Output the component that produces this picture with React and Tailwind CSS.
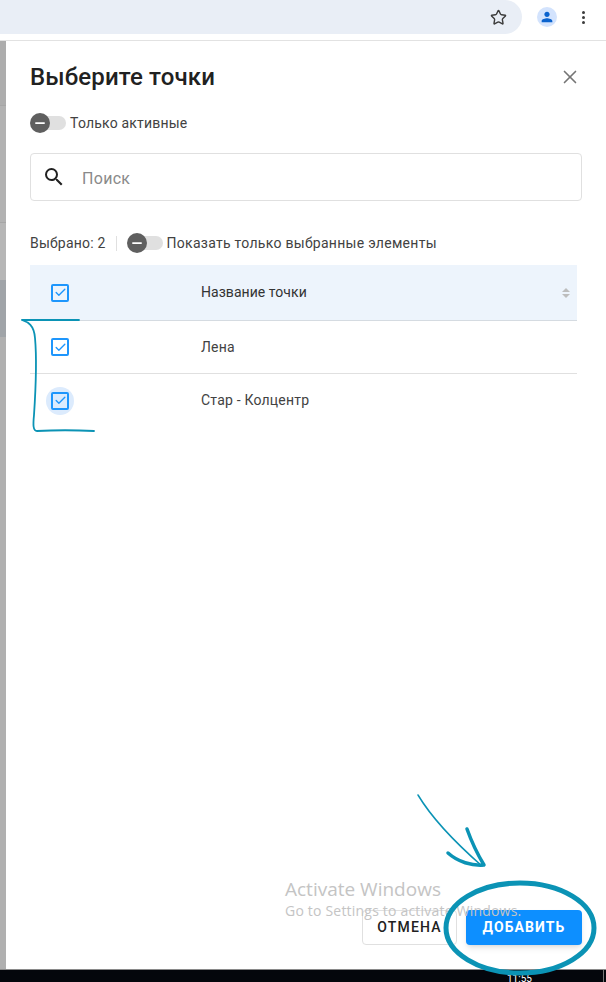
import React from 'react';
import { Star, X, Check, Minus } from 'lucide-react';

const Toggle = () => (
  <div className="relative w-[36px] h-[14px] flex items-center shrink-0">
    <div className="ml-[4px] w-[32px] h-[14px] rounded-full bg-[#e0e0e0]" />
    <div className="absolute left-0 top-[-3px] w-[20px] h-[20px] rounded-full bg-[#5f5f5f] flex items-center justify-center">
      <Minus size={14} strokeWidth={3} className="text-white" />
    </div>
  </div>
);

const Box = ({ halo }) => (
  <div className={`w-[28px] h-[28px] rounded-full flex items-center justify-center ${halo ? 'bg-[#dcebfd]' : ''}`}>
    <div className="w-[18px] h-[18px] rounded-[2px] border-2 border-[#1e96fc] flex items-center justify-center">
      <Check size={13} strokeWidth={2.5} className="text-[#1e96fc]" />
    </div>
  </div>
);

const Row = ({ name, halo, last }) => (
  <div className={`h-[53px] flex items-center ${last ? '' : 'border-b border-[#e0e0e0]'}`}>
    <div className="w-[60px] flex justify-center">
      <Box halo={halo} />
    </div>
    <span className="ml-[111px] text-[14px] text-[#424242] tracking-[0.2px]">{name}</span>
  </div>
);

export default function App() {
  return (
    <div className="relative w-[606px] h-[982px] overflow-hidden bg-white font-['Roboto',sans-serif] text-[#212121]">
      <div className="h-[41px] flex border-b border-[#e2e2e2] bg-white">
        <div className="w-[522px] h-[34px] rounded-r-full bg-[#e9eef6] flex items-center justify-end pr-[15px]">
          <Star size={17} strokeWidth={2} className="text-[#3c3c3c]" />
        </div>
        <div className="ml-[15px] mt-[7px] w-[20px] h-[20px] rounded-full bg-[#d3e3fd] flex items-center justify-center">
          <svg width="16" height="16" viewBox="0 0 24 24" fill="#0b63ce">
            <path d="M12 12c2.21 0 4-1.79 4-4s-1.79-4-4-4-4 1.79-4 4 1.79 4 4 4zm0 2c-2.67 0-8 1.34-8 4v2h16v-2c0-2.66-5.33-4-8-4z" />
          </svg>
        </div>
        <div className="ml-[25px] mt-[11px] flex flex-col gap-[2px]">
          <div className="w-[3px] h-[3px] rounded-full bg-[#3c3c3c]" />
          <div className="w-[3px] h-[3px] rounded-full bg-[#3c3c3c]" />
          <div className="w-[3px] h-[3px] rounded-full bg-[#3c3c3c]" />
        </div>
      </div>

      <div className="flex h-[928px]">
        <div className="w-[6px] shrink-0 flex flex-col bg-[#b0b0b0]">
          <div className="h-[64px] bg-[#adadad]" />
          <div className="h-[117px] bg-[#b2b2b2] border-t border-[#a6a6a6]" />
          <div className="h-[58px] bg-[#b6b6b6] border-t border-[#a6a6a6]" />
          <div className="h-[57px] bg-[#a0a4a8]" />
        </div>
        <div className="flex-1 flex flex-col pl-[24px] pr-[24px]">
          <div className="flex items-center justify-between pt-[21px]">
            <h1 className="text-[24px] leading-[30px] font-medium tracking-[0.13px] text-[#212121]">Выберите точки</h1>
            <X size={22} strokeWidth={1.8} className="text-[#757575] mr-[1px]" />
          </div>

          <div className="flex items-center mt-[21px] h-[20px]">
            <Toggle />
            <span className="ml-[4px] text-[14px] text-[#424242] tracking-[0.2px]">Только активные</span>
          </div>

          <div className="mt-[20px] h-[48px] rounded-[4px] border border-[#e0e0e0] flex items-center pl-[11px]">
            <svg width="24" height="24" viewBox="0 0 24 24" fill="#212121">
              <path d="M15.5 14h-.79l-.28-.27A6.47 6.47 0 0 0 16 9.5 6.5 6.5 0 1 0 9.5 16c1.61 0 3.09-.59 4.23-1.57l.27.28v.79l5 4.99L20.49 19l-4.99-5zm-6 0C7.01 14 5 11.99 5 9.5S7.01 5 9.5 5 14 7.01 14 9.5 11.99 14 9.5 14z" />
            </svg>
            <span className="ml-[16px] mt-[3px] text-[16px] tracking-[0.3px] text-[#8a8a8a]">Поиск</span>
          </div>

          <div className="flex items-center mt-[32px] h-[20px]">
            <span className="text-[14px] text-[#424242] tracking-[0.2px]">Выбрано: 2</span>
            <div className="ml-[10px] mr-[10px] w-px h-[15px] bg-[#e0e0e0]" />
            <Toggle />
            <span className="ml-[4px] text-[14px] text-[#424242] tracking-[0.28px]">Показать только выбранные элементы</span>
          </div>

          <div className="mt-[12px] w-[547px]">
            <div className="h-[56px] bg-[#edf4fc] border-b border-[#d5dbe1] flex items-center">
              <div className="w-[60px] flex justify-center">
                <Box />
              </div>
              <span className="ml-[111px] text-[14px] text-[#333] tracking-[0.05px]">Название точки</span>
              <svg className="ml-auto mr-[6px]" width="10" height="12" viewBox="0 0 10 12">
                <path d="M5 1l4 4H1z" fill="#bdbdbd" />
                <path d="M5 11L1 7h8z" fill="#bdbdbd" />
              </svg>
            </div>
            <Row name="Лена" />
            <Row name="Стар - Колцентр" halo last />
          </div>

          <div className="mt-auto mb-[24px] flex justify-end gap-[9px]">
            <button className="w-[95px] h-[35px] rounded-[4px] border border-[#e0e0e0] text-[14px] font-medium tracking-[1.2px] text-[#212121]">ОТМЕНА</button>
            <button className="w-[116px] h-[35px] rounded-[4px] bg-[#0d8fff] shadow-md text-[14px] font-bold tracking-[1.1px] text-white">ДОБАВИТЬ</button>
          </div>
        </div>
      </div>

      <div className="h-[13px] bg-[#04060c] border-t border-[#8a8a8a] relative">
        <span className="absolute left-[507px] top-[4px] text-[10px] leading-[10px] text-white">11:55</span>
        <div className="absolute left-[603px] top-0 w-px h-[13px] bg-[#777]" />
      </div>

      <div className="absolute left-[285px] top-[877px] text-[#c4c4c4] font-['Open_Sans',sans-serif] pointer-events-none">
        <div className="text-[19px] leading-[24px]">Activate Windows</div>
        <div className="text-[14px] leading-[20px] tracking-[0.2px]">Go to Settings to activate Windows.</div>
      </div>

      <svg className="absolute left-0 top-0 pointer-events-none" width="606" height="982" viewBox="0 0 606 982" fill="none" stroke="#0b93b5" strokeLinecap="round" strokeLinejoin="round">
        <path d="M22 320 C28 322 34 325 35 338 C37 360 36 385 34 415 C33 425 33 431 37 431 C55 430 75 430 94 431 M22 320 H79" strokeWidth="1.8" />
        <path d="M418 795 C430 815 450 838 482 866" strokeWidth="1.5" />
        <path d="M467 829 C472 843 478 855 484 865 C472 866 458 862 448 853" strokeWidth="3.5" />
        <ellipse cx="520" cy="928" rx="74" ry="45" strokeWidth="5" />
      </svg>
    </div>
  );
}
